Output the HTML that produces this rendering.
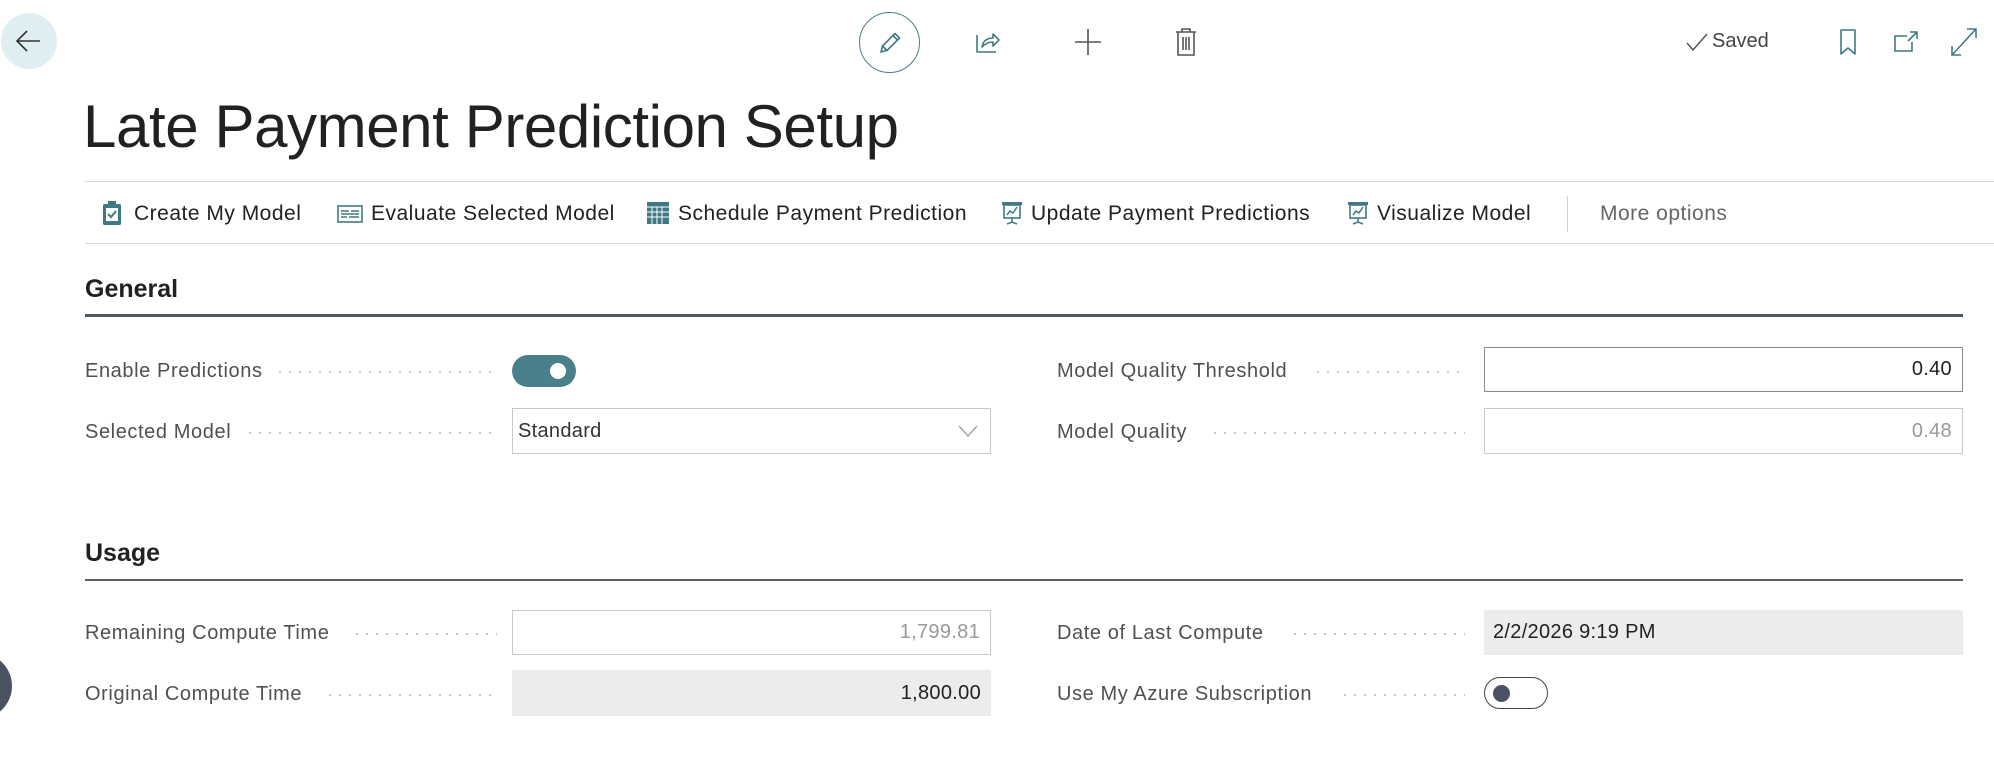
<!DOCTYPE html>
<html><head><meta charset="utf-8"><style>
*{margin:0;padding:0;box-sizing:border-box}
body{width:1994px;height:766px;background:#fff;position:relative;overflow:hidden;font-family:"Liberation Sans",sans-serif;color:#212121}
.a{position:absolute}
.lbl{position:absolute;font-size:20px;letter-spacing:0.6px;color:#505050;line-height:24px;display:flex;align-items:center}
.dots{position:absolute;height:2px;background-image:radial-gradient(circle,#c4c4c4 1px,transparent 1.2px);background-size:10px 2px}
.box{position:absolute;border:1px solid #c8c8c8;font-size:20px;letter-spacing:0.3px;display:flex;align-items:center;padding:0 10px}
.act{position:absolute;top:202px;font-size:21px;letter-spacing:0.5px;color:#212121;line-height:24px;white-space:nowrap}
svg{position:absolute}
</style></head><body>
<div class="a" style="left:1px;top:13px;width:56px;height:56px;border-radius:50%;background:#dfeef1"></div>
<svg style="left:14px;top:28px" width="30" height="26" viewBox="0 0 30 26"><path d="M26 13H3M13 3L3 13l10 10" fill="none" stroke="#333" stroke-width="1.6"/></svg>
<div class="a" style="left:859px;top:12px;width:61px;height:61px;border-radius:50%;border:1.5px solid #4d7f88"></div>
<svg style="left:876px;top:29px" width="28" height="28" viewBox="0 0 28 28"><path d="M5 23l1.5-6L19 4.5l4.5 4.5L11 21.5zM6.5 17l4.5 4.5M17 6.5l4.5 4.5" fill="none" stroke="#3f7a84" stroke-width="1.6" stroke-linejoin="round"/></svg>
<svg style="left:974px;top:29px" width="28" height="26" viewBox="0 0 28 26"><path d="M3 6v17h19M8 18c1-6 5-9 11-9V5l6 6-6 6v-4c-5 0-8 2-11 5z" fill="none" stroke="#3f7a84" stroke-width="1.6" stroke-linejoin="round"/></svg>
<svg style="left:1074px;top:28px" width="28" height="28" viewBox="0 0 28 28"><path d="M14 1v26M1 14h26" stroke="#555" stroke-width="1.6"/></svg>
<svg style="left:1174px;top:27px" width="24" height="30" viewBox="0 0 24 30"><path d="M2 5h20M8 5V2h8v3M4 5v23h16V5M9 10v13M12 10v13M15 10v13" fill="none" stroke="#555" stroke-width="1.6"/></svg>
<svg style="left:1685px;top:32px" width="24" height="20" viewBox="0 0 24 20"><path d="M2 11l6 7L22 2" fill="none" stroke="#555" stroke-width="1.5"/></svg>
<div class="a" style="left:1712px;top:30px;font-size:20px;color:#444">Saved</div>
<svg style="left:1838px;top:28px" width="20" height="28" viewBox="0 0 20 28"><path d="M3 2h14v24l-7-6-7 6z" fill="none" stroke="#3f7a84" stroke-width="1.6" stroke-linejoin="round"/></svg>
<svg style="left:1892px;top:30px" width="28" height="24" viewBox="0 0 28 24"><path d="M15 6H3v15h17V12M18 2h7v7M25 2l-9 9" fill="none" stroke="#3f7a84" stroke-width="1.6"/></svg>
<svg style="left:1950px;top:27px" width="28" height="30" viewBox="0 0 28 30"><path d="M17 2h9v9M26 2L2 28M2 19v9h9" fill="none" stroke="#3f7a84" stroke-width="1.6"/></svg>
<div class="a" style="left:83px;top:89px;font-size:60px;font-weight:300;color:#212121;line-height:76px;letter-spacing:-0.4px">Late Payment Prediction Setup</div>
<div class="a" style="left:85px;top:181px;width:1909px;height:1px;background:#d6d6d6"></div>
<div class="a" style="left:85px;top:243px;width:1909px;height:1px;background:#d6d6d6"></div>
<svg style="left:102px;top:200px" width="20" height="26" viewBox="0 0 20 26"><rect x="1" y="4" width="18" height="21" rx="1.5" fill="#3f7a84"/><rect x="4" y="8" width="12" height="13" fill="#fff"/><rect x="6" y="1" width="8" height="5" fill="#3f7a84"/><path d="M6 14l3 3 5-6" fill="none" stroke="#3f7a84" stroke-width="2"/></svg>
<div class="act" style="left:134px">Create My Model</div>
<svg style="left:337px;top:205px" width="26" height="18" viewBox="0 0 26 18"><rect x="1" y="1" width="24" height="16" fill="none" stroke="#3f7a84" stroke-width="1.6"/><path d="M4 6h8M14 6h8M4 9h18M4 12h6M12 12h10" stroke="#3f7a84" stroke-width="1.5"/></svg>
<div class="act" style="left:371px">Evaluate Selected Model</div>
<svg style="left:646px;top:201px" width="24" height="24" viewBox="0 0 24 24"><rect x="1" y="1" width="22" height="22" fill="#3f7a84"/><path d="M1 6h22M1 11h22M1 16h22M6 6v17M11 6v17M16 6v17" stroke="#fff" stroke-width="1"/></svg>
<div class="act" style="left:678px">Schedule Payment Prediction</div>
<svg style="left:1001px;top:200px" width="22" height="26" viewBox="0 0 22 26"><rect x="1" y="2" width="20" height="3" fill="#3f7a84"/><rect x="3" y="5" width="16" height="13" fill="none" stroke="#3f7a84" stroke-width="1.6"/><path d="M6 15l3-4 3 2 4-6M11 18v4M6 24l5-2 5 2" fill="none" stroke="#3f7a84" stroke-width="1.5"/></svg>
<div class="act" style="left:1031px">Update Payment Predictions</div>
<svg style="left:1347px;top:200px" width="22" height="26" viewBox="0 0 22 26"><rect x="1" y="2" width="20" height="3" fill="#3f7a84"/><rect x="3" y="5" width="16" height="13" fill="none" stroke="#3f7a84" stroke-width="1.6"/><path d="M6 15l3-4 3 2 4-6M11 18v4M6 24l5-2 5 2" fill="none" stroke="#3f7a84" stroke-width="1.5"/></svg>
<div class="act" style="left:1377px">Visualize Model</div>
<div class="a" style="left:1567px;top:196px;width:1px;height:36px;background:#d0d0d0"></div>
<div class="act" style="left:1600px;color:#666">More options</div>
<div class="a" style="left:85px;top:275px;font-size:25px;font-weight:bold;color:#212121">General</div>
<div class="a" style="left:85px;top:314px;width:1878px;height:3px;background:#505862"></div>
<div class="lbl" style="left:85px;top:359px">Enable Predictions</div>
<div class="dots" style="left:275px;top:371px;width:222px"></div>
<div class="a" style="left:512px;top:355px;width:64px;height:32px;border-radius:16px;background:#4a7f8c"></div>
<div class="a" style="left:550px;top:363px;width:16px;height:16px;border-radius:50%;background:#fff"></div>
<div class="lbl" style="left:85px;top:420px">Selected Model</div>
<div class="dots" style="left:245px;top:432px;width:252px"></div>
<div class="box" style="left:512px;top:408px;width:479px;height:46px;color:#333;padding-left:5px">Standard</div>
<svg style="left:958px;top:424px" width="20" height="14" viewBox="0 0 20 14"><path d="M1 2l9 10 9-10" fill="none" stroke="#999" stroke-width="1.3"/></svg>
<div class="lbl" style="left:1057px;top:359px">Model Quality Threshold</div>
<div class="dots" style="left:1313px;top:371px;width:152px"></div>
<div class="box" style="left:1484px;top:347px;width:479px;height:45px;border-color:#8a8a8a;justify-content:flex-end;color:#212121">0.40</div>
<div class="lbl" style="left:1057px;top:420px">Model Quality</div>
<div class="dots" style="left:1210px;top:432px;width:255px"></div>
<div class="box" style="left:1484px;top:408px;width:479px;height:46px;justify-content:flex-end;color:#999">0.48</div>
<div class="a" style="left:85px;top:539px;font-size:25px;font-weight:bold;color:#212121">Usage</div>
<div class="a" style="left:85px;top:579px;width:1878px;height:2px;background:#5a5f66"></div>
<div class="lbl" style="left:85px;top:621px">Remaining Compute Time</div>
<div class="dots" style="left:352px;top:633px;width:145px"></div>
<div class="box" style="left:512px;top:610px;width:479px;height:45px;justify-content:flex-end;color:#999">1,799.81</div>
<div class="lbl" style="left:85px;top:682px">Original Compute Time</div>
<div class="dots" style="left:325px;top:694px;width:172px"></div>
<div class="box" style="left:512px;top:670px;width:479px;height:46px;border:none;background:#ebeced;justify-content:flex-end;color:#212121">1,800.00</div>
<div class="lbl" style="left:1057px;top:621px">Date of Last Compute</div>
<div class="dots" style="left:1290px;top:633px;width:175px"></div>
<div class="box" style="left:1484px;top:610px;width:479px;height:45px;border:none;background:#ebeced;color:#212121;padding-left:9px">2/2/2026 9:19 PM</div>
<div class="lbl" style="left:1057px;top:682px">Use My Azure Subscription</div>
<div class="dots" style="left:1340px;top:694px;width:125px"></div>
<div class="a" style="left:1484px;top:677px;width:64px;height:32px;border-radius:16px;border:1.5px solid #444;background:#fff"></div>
<div class="a" style="left:1493px;top:685px;width:17px;height:17px;border-radius:50%;background:#4b5262"></div>
<div class="a" style="left:-54px;top:653px;width:66px;height:66px;border-radius:50%;background:#4b5262"></div>
</body></html>
